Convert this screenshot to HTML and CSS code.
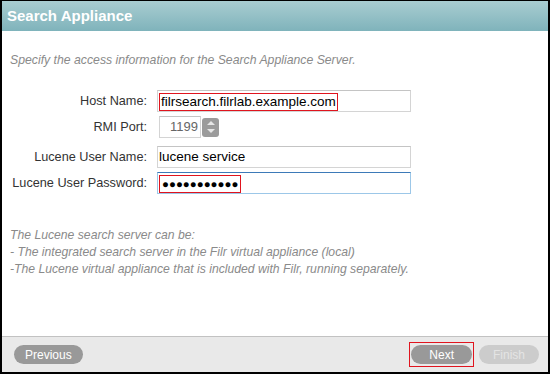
FILE: index.html
```html
<!DOCTYPE html>
<html lang="en">
<head>
    <meta charset="UTF-8">
    <title>Search Appliance</title>
    <link rel="stylesheet" href="styles.css">
</head>
<body>
    <div class="dialog">
        <div class="header">Search Appliance</div>

        <div class="content">
            <p class="intro">Specify the access information for the Search Appliance Server.</p>

            <div class="form">
                <div class="row">
                    <label>Host Name:</label>
                    <div class="field wide"><span class="mark">filrsearch.filrlab.example.com</span></div>
                </div>
                <div class="row">
                    <label>RMI Port:</label>
                    <div class="field port">1199</div>
                    <div class="spinner">
                        <span class="up"></span>
                        <span class="down"></span>
                    </div>
                </div>
                <div class="row after-port">
                    <label>Lucene User Name:</label>
                    <div class="field wide">lucene service</div>
                </div>
                <div class="row">
                    <label>Lucene User Password:</label>
                    <div class="field wide focused"><span class="mark dots">&#9679;&#9679;&#9679;&#9679;&#9679;&#9679;&#9679;&#9679;&#9679;&#9679;&#9679;</span></div>
                </div>
            </div>

            <div class="notes">
                <div>The Lucene search server can be:</div>
                <div>- The integrated search server in the Filr virtual appliance (local)</div>
                <div>-The Lucene virtual appliance that is included with Filr, running separately.</div>
            </div>
        </div>

        <div class="footer">
            <button class="btn">Previous</button>
            <div class="spacer"></div>
            <span class="mark-btn"><button class="btn">Next</button></span>
            <button class="btn disabled">Finish</button>
        </div>
    </div>
</body>
</html>
```

FILE: styles.css
```css
* {
    margin: 0;
    padding: 0;
    box-sizing: border-box;
}

body {
    font-family: 'Liberation Sans', Arial, sans-serif;
    background: #000;
    width: 550px;
    height: 374px;
    overflow: hidden;
}

.dialog {
    margin: 1px 2px 2px 2px;
    height: 371px;
    background: #fff;
    display: flex;
    flex-direction: column;
}

.header {
    height: 30px;
    background: linear-gradient(#a9cdd1, #7fb3bb);
    color: #fff;
    font-weight: bold;
    font-size: 15px;
    padding: 6px 0 0 5px;
}

.content {
    flex: 1;
    padding: 0 8px;
}

.intro {
    font-style: italic;
    color: #8a8a8a;
    font-size: 12.25px;
    margin-top: 22px;
}

.form {
    margin-top: 23px;
    display: flex;
    flex-direction: column;
    gap: 4px;
}

.row {
    display: flex;
    align-items: center;
    height: 22px;
}

.row.after-port {
    margin-top: 4px;
}

.row label {
    width: 137px;
    text-align: right;
    font-size: 12.7px;
    color: #333;
    margin-right: 10px;
}

.field {
    height: 22px;
    border: 1px solid #d4d4d4;
    border-top-color: #c4c4c4;
    font-size: 13.5px;
    color: #000;
    padding: 2px 1px;
    line-height: 16px;
}

.field.wide {
    width: 254px;
}

.field.port {
    width: 42px;
    margin-left: 2px;
    text-align: right;
    color: #666;
    padding-right: 2px;
    font-size: 13px;
}

.field.focused {
    border-color: #9cc7e8;
    border-top-color: #3d7ab8;
}

.mark {
    display: inline-block;
    border: 1px solid #e0141e;
    padding: 0 1px;
    line-height: 16px;
}

.mark.dots {
    font-size: 11.5px;
    padding: 0 2px;
}

.spinner {
    width: 17px;
    height: 19px;
    background: #9b9b9b;
    border-radius: 3px;
    margin-left: 1px;
    display: flex;
    flex-direction: column;
    align-items: center;
    justify-content: space-around;
    padding: 2px 0;
}

.spinner .up {
    width: 0;
    height: 0;
    border-left: 4px solid transparent;
    border-right: 4px solid transparent;
    border-bottom: 4px solid #e6e6e6;
}

.spinner .down {
    width: 0;
    height: 0;
    border-left: 4px solid transparent;
    border-right: 4px solid transparent;
    border-top: 4px solid #e6e6e6;
}

.notes {
    margin-top: 33px;
    font-style: italic;
    color: #8a8a8a;
    font-size: 12.2px;
    line-height: 17px;
}

.footer {
    height: 36px;
    background: #e9e9e9;
    border-top: 1px solid #c2c2c2;
    display: flex;
    align-items: center;
    padding: 0 9px 0 12px;
}

.spacer {
    flex: 1;
}

.btn {
    font-family: inherit;
    font-size: 12px;
    color: #fff;
    background: #999;
    border: none;
    border-radius: 10px;
    height: 19px;
    padding: 0 11px;
}

.btn.disabled {
    background: #ccc;
    color: #e4e4e4;
    padding: 0 14px;
    margin-left: 5px;
}

.mark-btn {
    border: 1px solid #e0141e;
    padding: 2px 1px;
    display: flex;
}

.mark-btn .btn {
    padding: 0 18px;
}
```
